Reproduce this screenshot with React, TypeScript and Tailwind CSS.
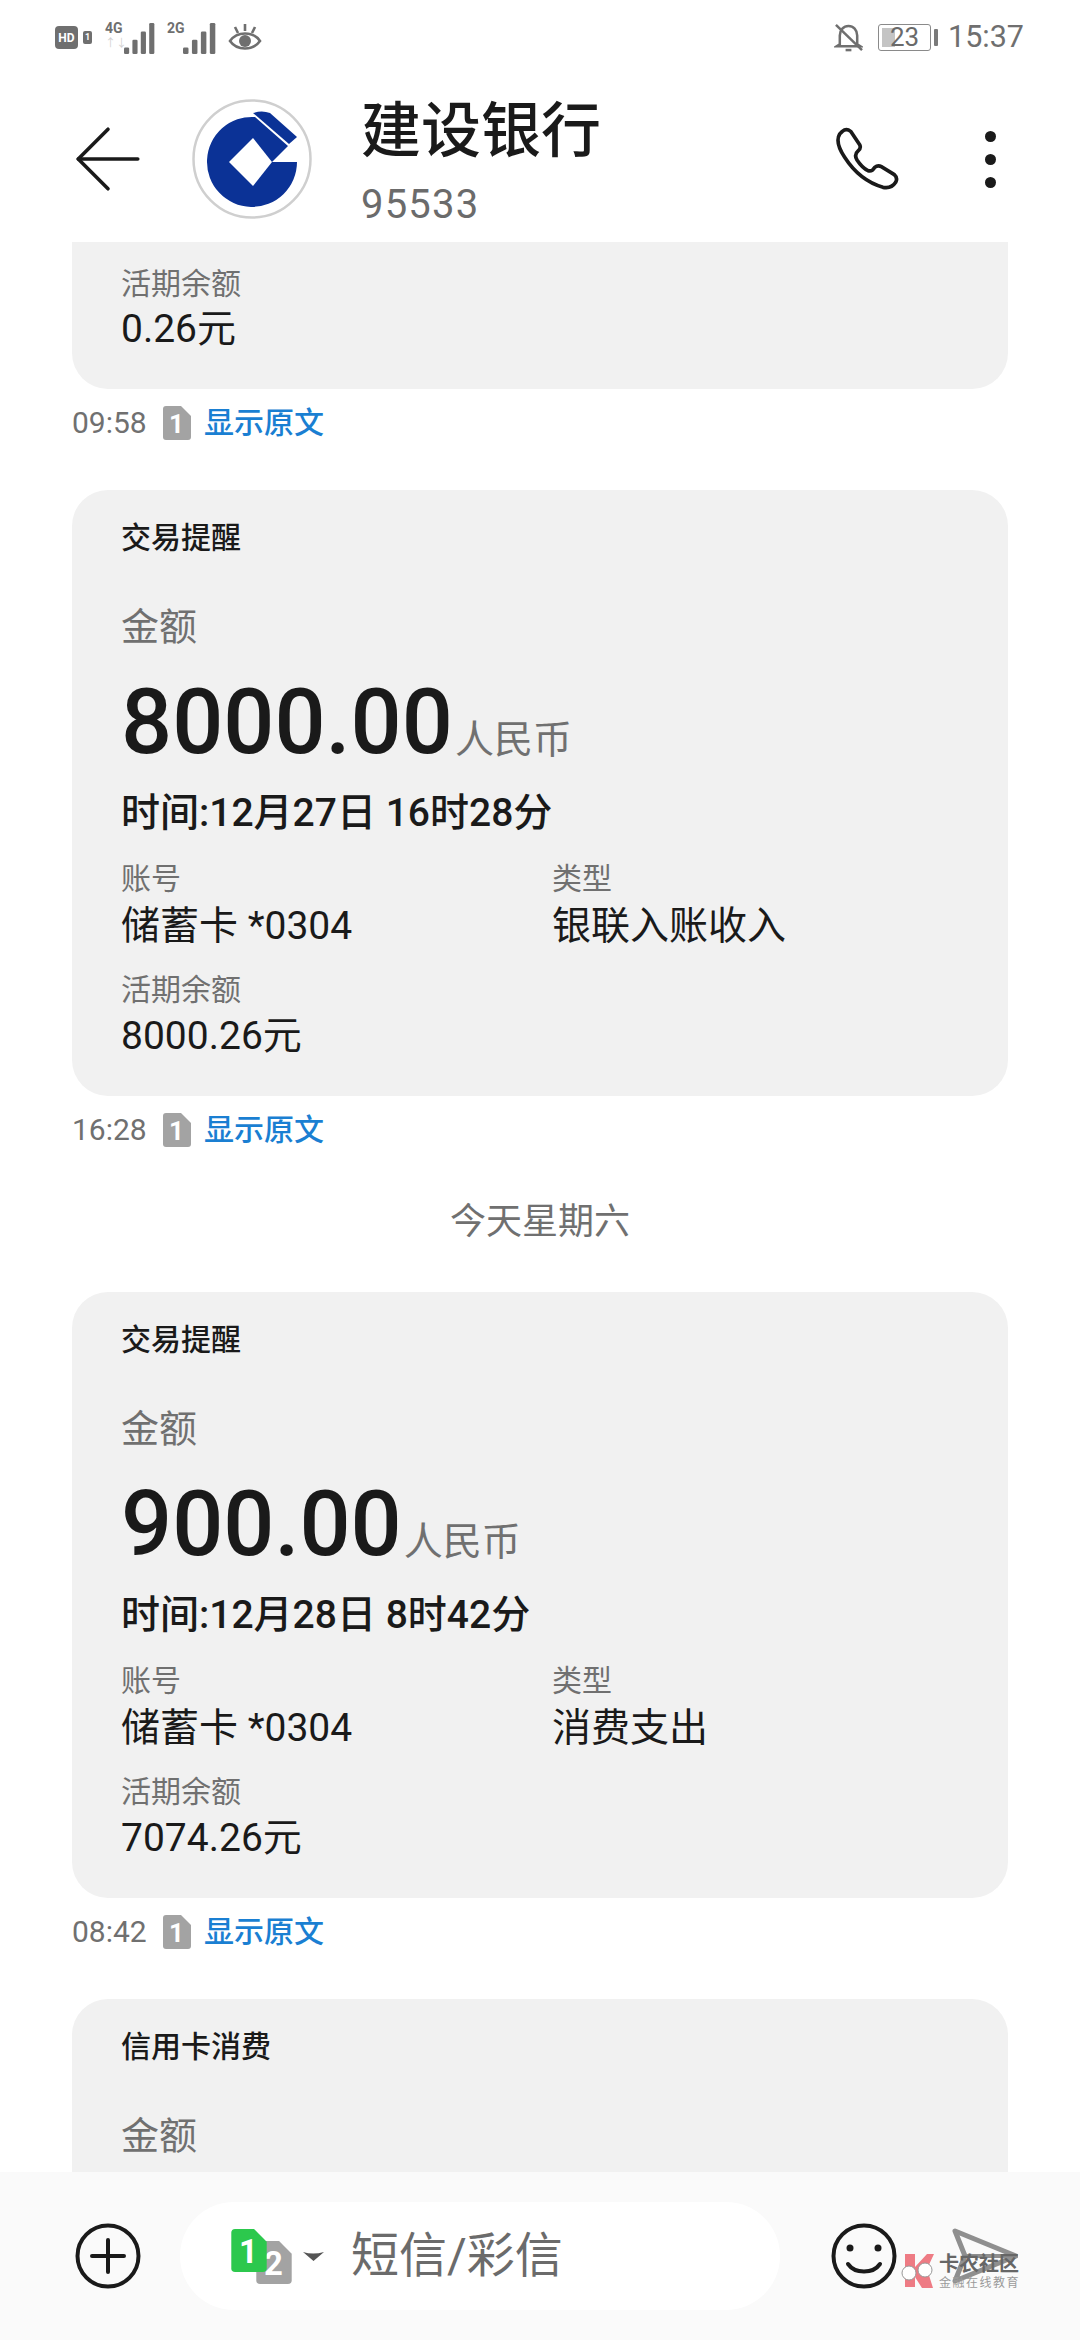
import { ArrowLeft } from "lucide-react";

function SimIcon({ n, color, className }: { n: string; color: string; className: string }) {
  return (
    <svg viewBox="0 0 28 34" className={className}>
      <path d="M3 0H18L28 10V31a3 3 0 0 1-3 3H3a3 3 0 0 1-3-3V3a3 3 0 0 1 3-3Z" fill={color} />
      <text x="13.5" y="27" textAnchor="middle" fontSize="26" fontWeight="700" fill="#fff" fontFamily="Roboto, sans-serif">
        {n}
      </text>
    </svg>
  );
}

function SignalBars() {
  return (
    <g fill="#6f6f6f">
      <rect x="0" y="19" width="4" height="5" rx="1" />
      <rect x="6.5" y="13" width="4" height="11" rx="1" />
      <rect x="13" y="6.5" width="4" height="17.5" rx="1" />
      <rect x="19.5" y="0" width="4" height="24" rx="1" />
    </g>
  );
}

function StatusBar() {
  return (
    <div className="mt-[12px] flex h-[50px] items-center justify-between pl-[55px] pr-[56px] pt-[1px] text-[#6f6f6f]">
      <div className="flex items-center">
        <div className="flex h-[23px] w-[23px] items-center justify-center rounded-[4px] bg-[#6f6f6f] text-[12px] font-bold leading-none text-white">
          HD
        </div>
        <div className="ml-[5px] flex h-[13px] w-[9px] items-center justify-center rounded-[2px] bg-[#6f6f6f] text-[9px] font-bold leading-none text-white">
          1
        </div>
        <div className="relative ml-[13px] h-[32px] w-[50px]">
          <span className="absolute left-0 top-[-1px] text-[14px] font-bold leading-[14px]">4G</span>
          <span className="absolute left-0 top-[16px] text-[11px] leading-[12px] text-[#d2d2d2]">↑↓</span>
          <svg viewBox="0 0 24 24" className="absolute left-[19px] top-[1px] h-[31px] w-[31px]" preserveAspectRatio="none">
            <SignalBars />
          </svg>
        </div>
        <div className="relative ml-[12px] h-[32px] w-[50px]">
          <span className="absolute left-0 top-[-1px] text-[14px] font-bold leading-[14px]">2G</span>
          <svg viewBox="0 0 24 24" className="absolute left-[16px] top-[1px] h-[31px] w-[33px]" preserveAspectRatio="none">
            <SignalBars />
          </svg>
        </div>
        <svg viewBox="0 0 34 30" className="ml-[11px] h-[30px] w-[34px]" fill="none" stroke="#6f6f6f" strokeWidth="2.6">
          <path d="M2 18C9 8 25 8 32 18C25 28 9 28 2 18Z" />
          <circle cx="17" cy="18" r="6" fill="#6f6f6f" stroke="none" />
          <path d="M17 1V8M7 4l3 6M27 4l-3 6" />
        </svg>
      </div>
      <div className="flex items-center">
        <svg viewBox="0 0 30 32" className="h-[31px] w-[29px]" fill="none" stroke="#6f6f6f" strokeWidth="2.6">
          <path d="M6 23V14C6 8 10 4 15 4C20 4 24 8 24 14V23L27 25H3Z" />
          <path d="M12 29h6" />
          <path d="M2 3L29 29" />
        </svg>
        <div className="relative ml-[15px] h-[27px] w-[53px] rounded-[3px] border border-[#8a8a8a]">
          <div className="absolute left-[3px] top-[3px] h-[19px] w-[13px] bg-[#c4c4c4]" />
          <span className="absolute inset-0 text-center text-[26px] leading-[24px] text-[#6a6a6a]">23</span>
        </div>
        <div className="ml-[3px] h-[17px] w-[4px] rounded-[1px] bg-[#7a7a7a]" />
        <span className="ml-[10px] text-[30.5px] leading-none">15:37</span>
      </div>
    </div>
  );
}

function CcbLogo() {
  return (
    <svg viewBox="192 99 120 120" className="h-[120px] w-[120px] shrink-0">
      <circle cx="252" cy="159" r="58.5" fill="#fff" stroke="#cfcfcf" strokeWidth="2.5" />
      <path d="M255 117L288 146L272 162H297A45 45 0 1 1 255 117Z" fill="#0b3296" />
      <path d="M253 138L272 162L253 186L229 162Z" fill="#fff" />
      <path d="M253 113Q262 110 270 113L297 137L289 144Z" fill="#0b3296" />
    </svg>
  );
}

function Header() {
  return (
    <div className="h-[242px] shrink-0 bg-white">
      <StatusBar />
      <div className="flex items-center pl-[72px] pr-[84px] pt-[27px]">
        <ArrowLeft size={102} strokeWidth={0.85} color="#1a1a1a" className="ml-[-15px] shrink-0" />
        <div className="ml-[33px]">
          <CcbLogo />
        </div>
        <div className="ml-[49px] flex-1 pt-[8px]">
          <div className="text-[60px] font-medium leading-[70px] text-[#1a1a1a]">建设银行</div>
          <div className="mt-[14px] text-[40px] leading-[48px] tracking-[1.2px] text-[#6b6b6b]">95533</div>
        </div>
        <svg viewBox="390 370 210 210" className="h-[70px] w-[70px]" fill="none" stroke="#1a1a1a" strokeWidth="11" strokeLinejoin="round">
          <path d="M418 392Q430 382 443 392L470 432Q475 442 466 450Q452 462 462 478Q478 502 495 510Q507 514 515 500Q525 492 535 498L574 522Q585 532 578 545Q565 565 540 560Q470 540 425 470Q395 425 410 400Z" />
        </svg>
        <div className="ml-[82px] flex flex-col gap-[12px]">
          <div className="h-[11px] w-[11px] rounded-full bg-[#1a1a1a]" />
          <div className="h-[11px] w-[11px] rounded-full bg-[#1a1a1a]" />
          <div className="h-[11px] w-[11px] rounded-full bg-[#1a1a1a]" />
        </div>
      </div>
    </div>
  );
}

function Field({
  label,
  value,
  className = "",
  valueClass = "mt-[2px]",
}: {
  label: string;
  value: string;
  className?: string;
  valueClass?: string;
}) {
  return (
    <div className={className}>
      <div className="text-[30px] leading-[40px] text-[#707070]">{label}</div>
      <div className={`${valueClass} text-[39px] leading-[50px] text-[#1a1a1a]`}>{value}</div>
    </div>
  );
}

function TradeCard({
  amount,
  time,
  type,
  balance,
}: {
  amount: string;
  time: string;
  type: string;
  balance: string;
}) {
  return (
    <div className="rounded-[36px] bg-[#f1f1f1] pb-[35px] pl-[49px] pt-[28px]">
      <div className="text-[30px] font-medium leading-[40px] text-[#1a1a1a]">交易提醒</div>
      <div className="mt-[44px] text-[38px] leading-[50px] text-[#707070]">金额</div>
      <div className="mt-[26px] flex items-baseline">
        <span className="text-[90px] font-medium leading-[90px] text-[#1a1a1a]">{amount}</span>
        <span className="ml-[2px] text-[39px] leading-none text-[#707070]">人民币</span>
      </div>
      <div className="mt-[20px] text-[39px] font-medium leading-[50px] text-[#1a1a1a]">{time}</div>
      <div className="mt-[21px] grid grid-cols-[431px_1fr]">
        <Field label="账号" value="储蓄卡 *0304" />
        <Field label="类型" value={type} />
      </div>
      <Field label="活期余额" value={balance} className="mt-[19px]" valueClass="mt-[1px]" />
    </div>
  );
}

function Meta({ time }: { time: string }) {
  return (
    <div className="mt-[14px] flex h-[40px] items-center">
      <span className="w-[91px] text-[30px] leading-[40px] text-[#707070]">{time}</span>
      <SimIcon n="1" color="#a3a3a3" className="h-[34px] w-[28px]" />
      <span className="ml-[13px] text-[30px] font-medium leading-[40px] text-[#1a7fd2]">显示原文</span>
    </div>
  );
}

function InputBar() {
  return (
    <div className="relative flex h-[168px] shrink-0 items-center bg-[#fafafa] pl-[75px]">
      <svg viewBox="0 0 66 66" className="h-[66px] w-[66px] shrink-0" fill="none" stroke="#1a1a1a" strokeWidth="4" strokeLinecap="round">
        <circle cx="33" cy="33" r="30.5" />
        <path d="M33 17V49M17 33H49" />
      </svg>
      <div className="ml-[39px] flex h-[108px] w-[600px] items-center rounded-full bg-white pl-[51px]">
        <div className="relative h-[55px] w-[61px] shrink-0">
          <SimIcon n="2" color="#a3a3a3" className="absolute left-[25px] top-[12px] h-[43px] w-[36px]" />
          <SimIcon n="1" color="#2cc84d" className="absolute left-0 top-0 h-[43px] w-[36px]" />
        </div>
        <svg viewBox="0 0 21 9" className="ml-[11px] h-[9px] w-[21px] shrink-0">
          <path d="M0 0Q10 3 21 0L10.500 9Z" fill="#555" />
        </svg>
        <span className="ml-[27px] text-[48px] leading-[60px] text-[#6b6b6b]">短信/彩信</span>
      </div>
      <svg viewBox="0 0 66 66" className="ml-[51px] h-[66px] w-[66px] shrink-0" fill="none" stroke="#1a1a1a" strokeWidth="4" strokeLinecap="round">
        <circle cx="33" cy="33" r="30.5" />
        <circle cx="19" cy="25" r="3.500" fill="#1a1a1a" stroke="none" />
        <circle cx="47" cy="25" r="3.500" fill="#1a1a1a" stroke="none" />
        <path d="M17 41C24 51 42 51 49 41" />
      </svg>
      <svg viewBox="0 0 66 56" className="ml-[55px] h-[56px] w-[66px] shrink-0" fill="none" stroke="#8f8f8f" strokeWidth="5" strokeLinejoin="round">
        <path d="M3 3L64 28L3 53L13 28Z" />
        <path d="M13 28H64" strokeWidth="4" />
      </svg>
      {/* forum watermark sits over the send button */}
      <div className="absolute left-[900px] top-[81px] flex items-start">
        <svg viewBox="0 0 36 36" className="h-[36px] w-[36px] shrink-0">
          <path d="M5 1H15V14L27 1H34L27 16L33 35H22L15 24V34H5Z" fill="#ee7b84" />
          <circle cx="9" cy="20" r="7" fill="#fff" stroke="#999" strokeWidth="1" />
          <circle cx="25" cy="17" r="7" fill="#fff" stroke="#999" strokeWidth="1" />
        </svg>
        <div className="ml-[3px] text-[#666]">
          <div className="text-[20px] font-bold leading-[22px]">卡农社区</div>
          <div className="mt-[1px] text-[12px] leading-[14px] tracking-[1.500px] text-[#9a9a9a]">金融在线教育</div>
        </div>
      </div>
    </div>
  );
}

export default function App() {
  return (
    <div className="flex h-[2340px] w-[1080px] flex-col overflow-hidden bg-white font-['Roboto','Noto_Sans_CJK_SC',sans-serif]">
      <Header />
      <div className="flex-1 overflow-hidden px-[72px]">
        <div className="rounded-b-[36px] bg-[#f1f1f1] pb-[35px] pl-[49px] pt-[22px]">
          <Field label="活期余额" value="0.26元" valueClass="mt-0" />
        </div>
        <Meta time="09:58" />

        <div className="mt-[47px]">
          <TradeCard amount="8000.00" time="时间:12月27日 16时28分" type="银联入账收入" balance="8000.26元" />
        </div>
        <Meta time="16:28" />

        <div className="mt-[47px] text-center text-[36px] leading-[50px] text-[#707070]">今天星期六</div>

        <div className="mt-[45px]">
          <TradeCard amount="900.00" time="时间:12月28日 8时42分" type="消费支出" balance="7074.26元" />
        </div>
        <Meta time="08:42" />

        <div className="mt-[47px] h-[400px] rounded-[36px] bg-[#f1f1f1] pl-[49px] pt-[28px]">
          <div className="text-[30px] font-medium leading-[40px] text-[#1a1a1a]">信用卡消费</div>
          <div className="mt-[44px] text-[38px] leading-[50px] text-[#707070]">金额</div>
        </div>
      </div>
      <InputBar />
    </div>
  );
}
